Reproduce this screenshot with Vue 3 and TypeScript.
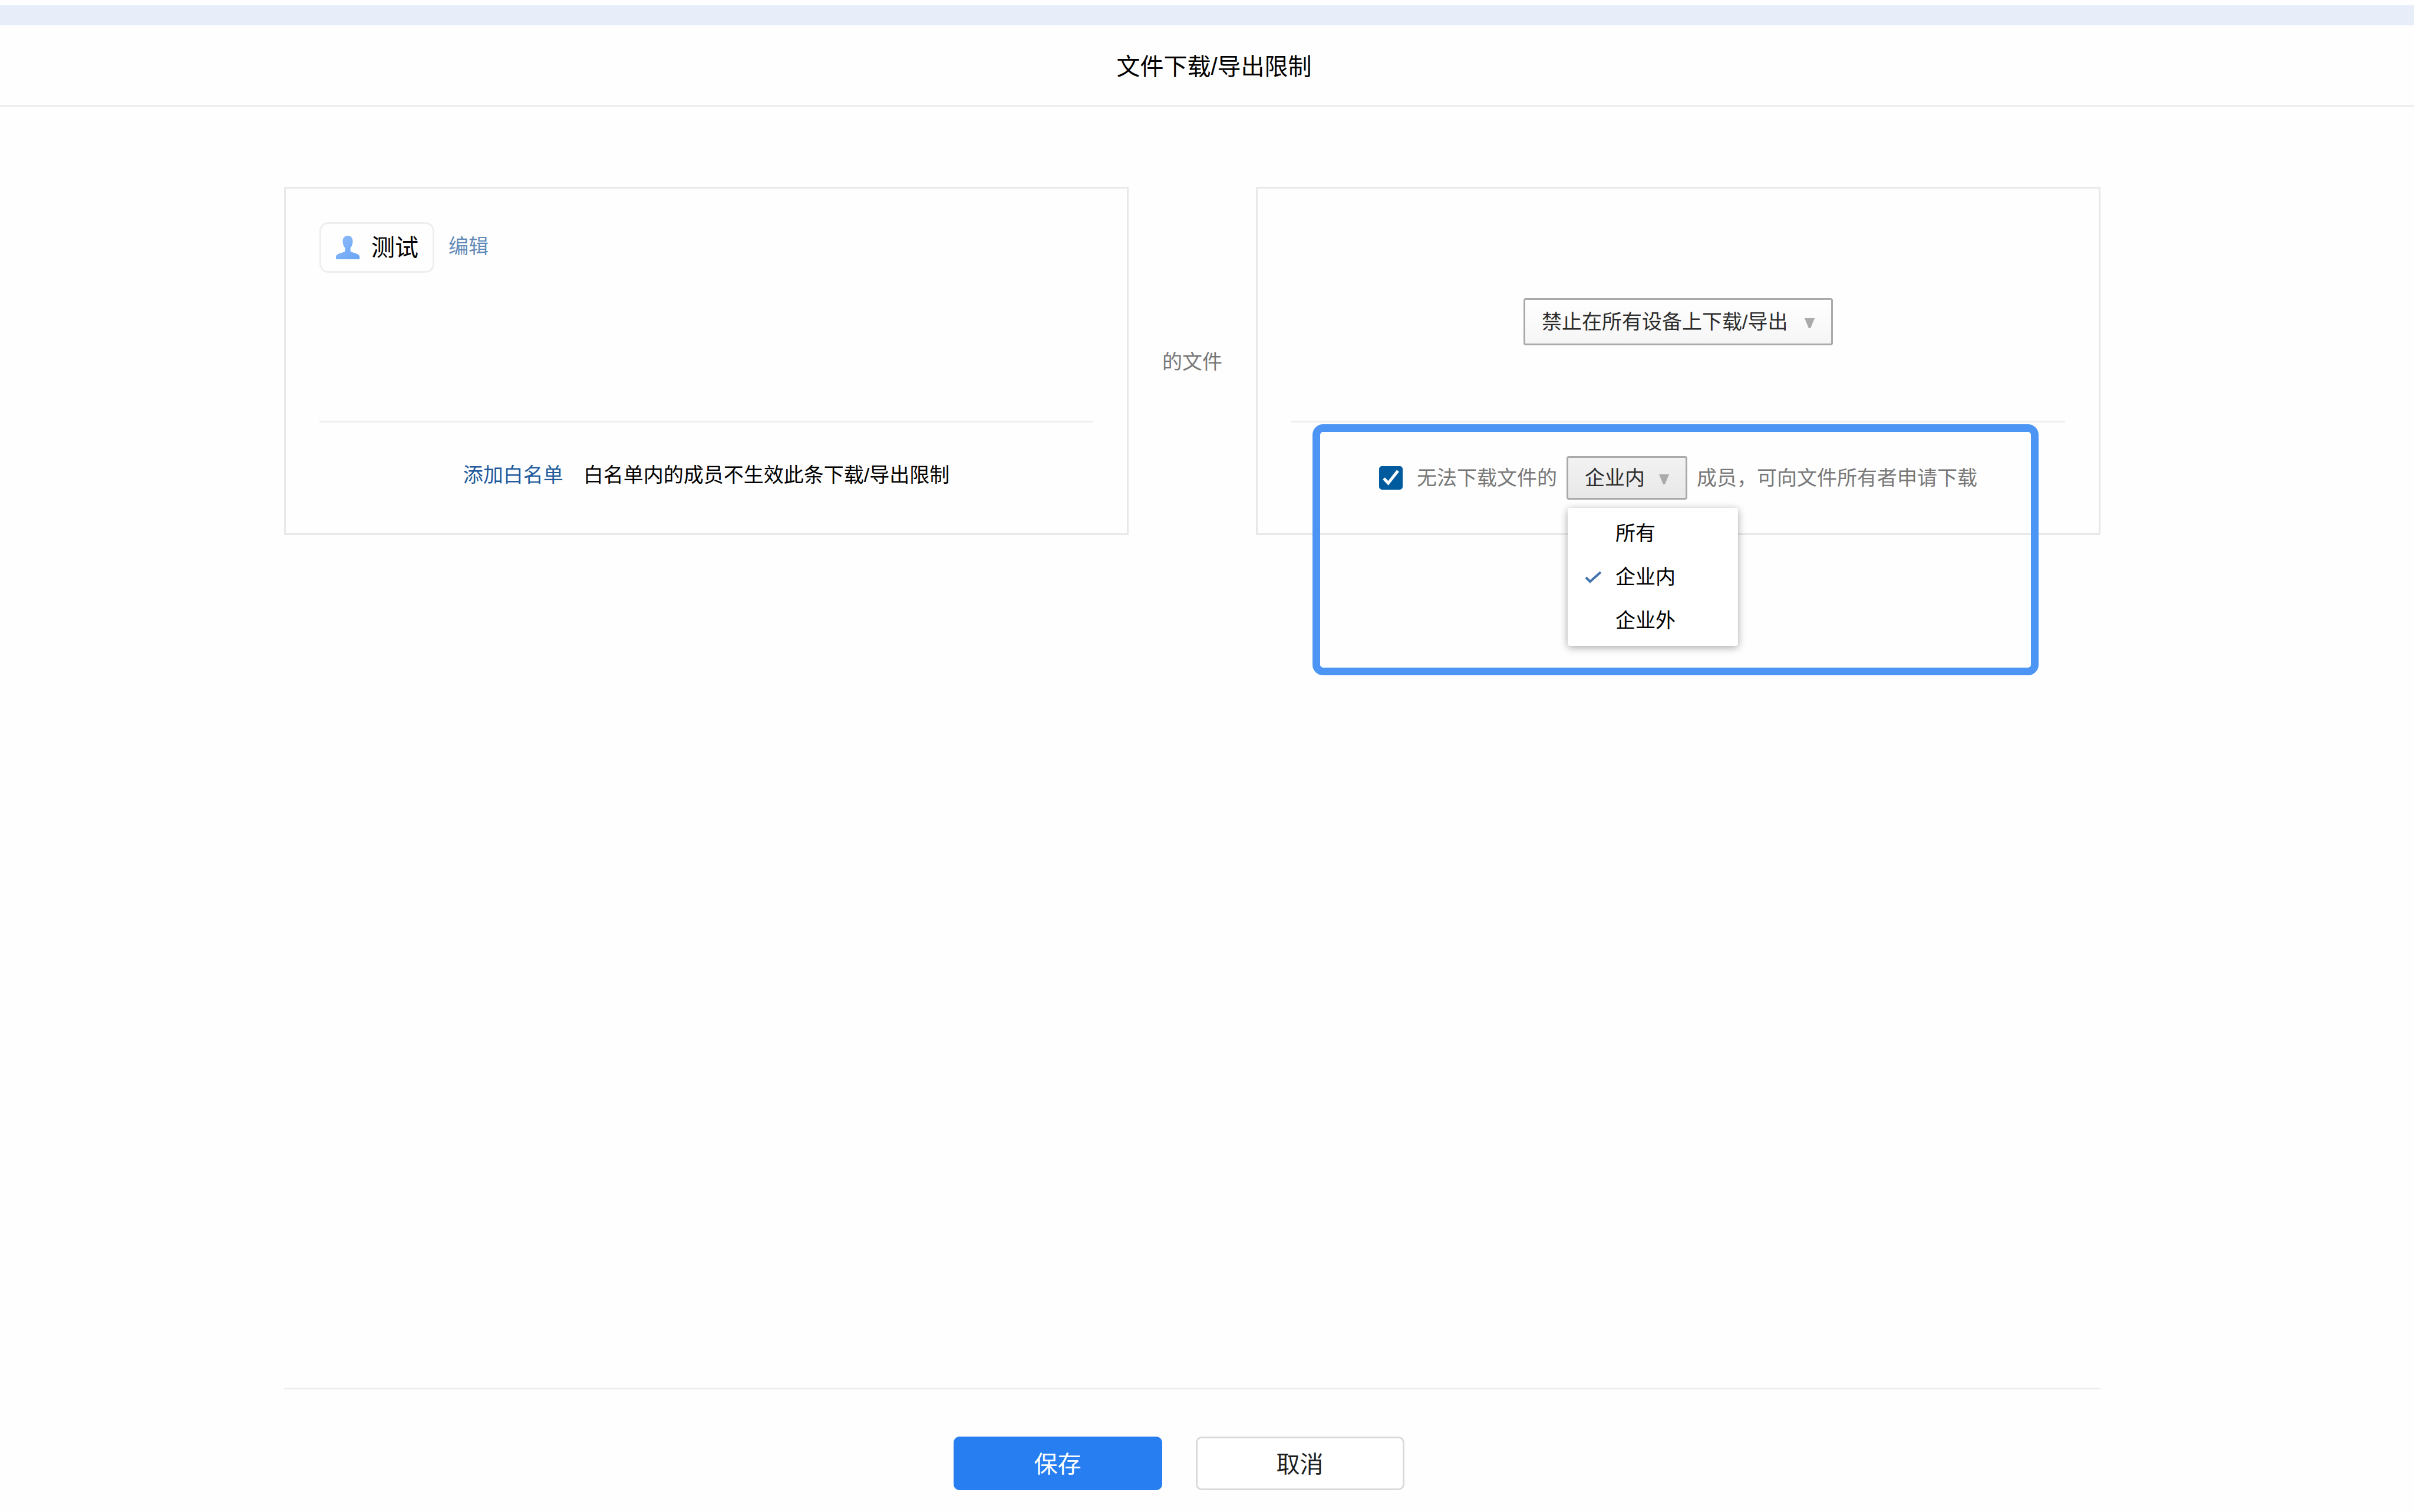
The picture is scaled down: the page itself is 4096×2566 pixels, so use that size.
<script setup lang="ts">
import { ref } from 'vue'

const deviceRules = ['禁止在所有设备上下载/导出', '禁止在手机上下载/导出', '不限制下载/导出']
const scopes = ['所有', '企业内', '企业外']

const deviceRule = ref(deviceRules[0])
const allowRequest = ref(true)
const scope = ref('企业内')
</script>

<template>
  <div class="page">
    <div class="band"></div>
    <header class="header">
      <h1 class="title">文件下载/导出限制</h1>
    </header>

    <main class="content">
      <section class="panel">
        <div class="upper members">
          <div class="chip">
            <svg class="avatar" viewBox="0 0 40 40" aria-hidden="true">
              <defs>
                <linearGradient id="avatar-fill" x1="0" y1="0" x2="1" y2="1">
                  <stop offset="0" stop-color="#8fbcf9" />
                  <stop offset="1" stop-color="#68a4f5" />
                </linearGradient>
              </defs>
              <path
                fill="url(#avatar-fill)"
                d="M20 0C25.5 0 28.5 4 28.5 9.5C28.5 14 27 18 24.6 20.6C24.4 23 24.6 25.5 25.4 27.6C31 29.2 37.500 30.500 40 34.500V40H0V34.500C2.500 30.500 9 29.200 14.600 27.600C15.400 25.500 15.600 23 15.400 20.600C13 18 11.500 14 11.500 9.500C11.500 4 14.500 0 20 0Z"
              />
            </svg>
            <span>测试</span>
          </div>
          <a class="link edit" href="#">编辑</a>
        </div>
        <div class="lower whitelist">
          <a class="link" href="#">添加白名单</a>
          <span>白名单内的成员不生效此条下载/导出限制</span>
        </div>
      </section>

      <div class="between">的文件</div>

      <section class="panel">
        <div class="upper rule">
          <div class="picker">
            <select v-model="deviceRule" class="select" aria-label="下载限制">
              <option v-for="rule in deviceRules" :key="rule" :value="rule">{{ rule }}</option>
            </select>
            <svg class="arrow" viewBox="0 0 17 17" aria-hidden="true"><path d="M0 0H17L10 17H7Z" /></svg>
          </div>
        </div>
        <div class="lower request">
          <label class="check">
            <span class="box">
              <input v-model="allowRequest" type="checkbox" class="box-input" />
              <svg v-if="allowRequest" class="box-tick" viewBox="0 0 40 40" aria-hidden="true">
                <path d="M8 21L15.500 29L32 8" />
              </svg>
            </span>
            <span>无法下载文件的</span>
          </label>
          <div class="picker">
            <select v-model="scope" class="select open" aria-label="成员范围">
              <option v-for="item in scopes" :key="item" :value="item">{{ item }}</option>
            </select>
            <svg class="arrow" viewBox="0 0 17 17" aria-hidden="true"><path d="M0 0H17L10 17H7Z" /></svg>
            <ul class="menu" role="listbox" aria-label="成员范围">
              <li
                v-for="item in scopes"
                :key="item"
                class="menu-item"
                role="option"
                :aria-selected="item === scope"
                @click="scope = item"
              >
                <span class="mark">
                  <svg v-if="item === scope" class="mark-tick" viewBox="0 0 29 21" aria-hidden="true">
                    <path d="M2 11L9 18L27 2" />
                  </svg>
                </span>
                <span>{{ item }}</span>
              </li>
            </ul>
          </div>
          <span>成员，可向文件所有者申请下载</span>
        </div>
        <div class="highlight"></div>
      </section>
    </main>

    <footer class="footer">
      <button class="button primary" type="button">保存</button>
      <button class="button" type="button">取消</button>
    </footer>
  </div>
</template>

<style>
body {
  margin: 0;
  background: #fefefe;
}
</style>

<style scoped>
* {
  box-sizing: border-box;
}

.page {
  display: flex;
  flex-direction: column;
  min-height: 100vh;
  padding-top: 9px;
  font-family: "Liberation Sans", "Noto Sans CJK SC", sans-serif;
  font-size: 34px;
  line-height: 50px;
  color: #000;
}

.band {
  height: 34px;
  background: #e7eefa;
}

.header {
  display: flex;
  align-items: center;
  justify-content: center;
  height: 138px;
  padding: 4px 0 0 24px;
  border-bottom: 3px solid #eceef0;
}

.title {
  margin: 0;
  font-size: 40px;
  font-weight: 400;
}

.content {
  display: grid;
  grid-template-columns: 1fr 216px 1fr;
  flex: 1;
  align-items: start;
  margin: 136px 532px 0 482px;
}

.panel {
  position: relative;
  padding: 0 57px;
  border: 3px solid #e6e8e9;
}

.upper {
  display: flex;
  height: 397px;
  border-bottom: 3px solid #eee;
}

.lower {
  display: flex;
  align-items: center;
  justify-content: center;
  height: 188px;
}

.members {
  align-items: flex-start;
  gap: 24px;
  padding-top: 57px;
}

.chip {
  display: flex;
  align-items: center;
  gap: 20px;
  height: 86px;
  padding: 0 24px 0 25px;
  border: 3px solid #eee;
  border-radius: 15px;
  font-size: 40px;
}

.avatar {
  width: 40px;
  height: 40px;
}

.link {
  color: #1f5a9c;
  text-decoration: none;
}

.edit {
  padding-top: 16px;
  opacity: 0.7;
}

.whitelist {
  gap: 34px;
  padding-bottom: 10px;
}

.between {
  align-self: start;
  padding-top: 272px;
  text-align: center;
  color: #787878;
}

.rule {
  align-items: center;
  justify-content: center;
  padding-top: 57px;
}

.picker {
  position: relative;
  display: flex;
}

.select {
  appearance: none;
  height: 80px;
  margin: 0;
  padding: 0 73px 0 28px;
  border: 3px solid #aaa;
  border-radius: 4px;
  background: linear-gradient(#fff, #f5f5f5);
  font: inherit;
  color: #2c2c2c;
}

.select.open {
  height: 74px;
  padding-right: 69px;
  background: linear-gradient(#f2f2f2, #e8e8e8);
}

.arrow {
  position: absolute;
  top: 50%;
  right: 31px;
  width: 17px;
  height: 17px;
  margin-top: -6px;
  fill: #aaa;
  pointer-events: none;
}

.request {
  gap: 16px;
  color: #787878;
}

.check {
  display: flex;
  align-items: center;
  gap: 24px;
}

.box {
  position: relative;
  display: flex;
}

.box-input {
  appearance: none;
  width: 40px;
  height: 40px;
  margin: 0;
  border: 3px solid #767676;
  border-radius: 5px;
}

.box-input:checked {
  border-color: #005a9e;
  background: #005a9e;
}

.box-tick {
  position: absolute;
  inset: 0;
  fill: none;
  stroke: #fff;
  stroke-width: 5;
  pointer-events: none;
}

.menu {
  position: absolute;
  top: 88px;
  left: 2px;
  z-index: 1;
  width: 289px;
  margin: 0;
  padding: 6px 0;
  border-radius: 4px;
  background: #fff;
  box-shadow: 0 3px 14px rgba(0, 0, 0, 0.35);
  list-style: none;
  color: #000;
}

.menu-item {
  display: flex;
  align-items: center;
  gap: 23px;
  height: 74px;
  padding-left: 29px;
}

.mark {
  display: flex;
  width: 29px;
}

.mark-tick {
  width: 29px;
  height: 21px;
  fill: none;
  stroke: #4173ad;
  stroke-width: 4;
}

.highlight {
  position: absolute;
  top: 400px;
  right: 102px;
  left: 93px;
  height: 426px;
  border: 13px solid #4c95f4;
  border-radius: 18px;
  pointer-events: none;
}

.footer {
  display: flex;
  justify-content: center;
  gap: 57px;
  margin: 0 532px 0 482px;
  padding: 80px 46px 37px 0;
  border-top: 3px solid #eee;
}

.button {
  width: 354px;
  height: 91px;
  padding: 2px 0 0;
  border: 3px solid #d9dadc;
  border-radius: 10px;
  background: #fff;
  font: inherit;
  font-size: 40px;
  color: #1c1f23;
}

.button.primary {
  border-color: #277ef0;
  background: #277ef0;
  color: #fff;
}
</style>
